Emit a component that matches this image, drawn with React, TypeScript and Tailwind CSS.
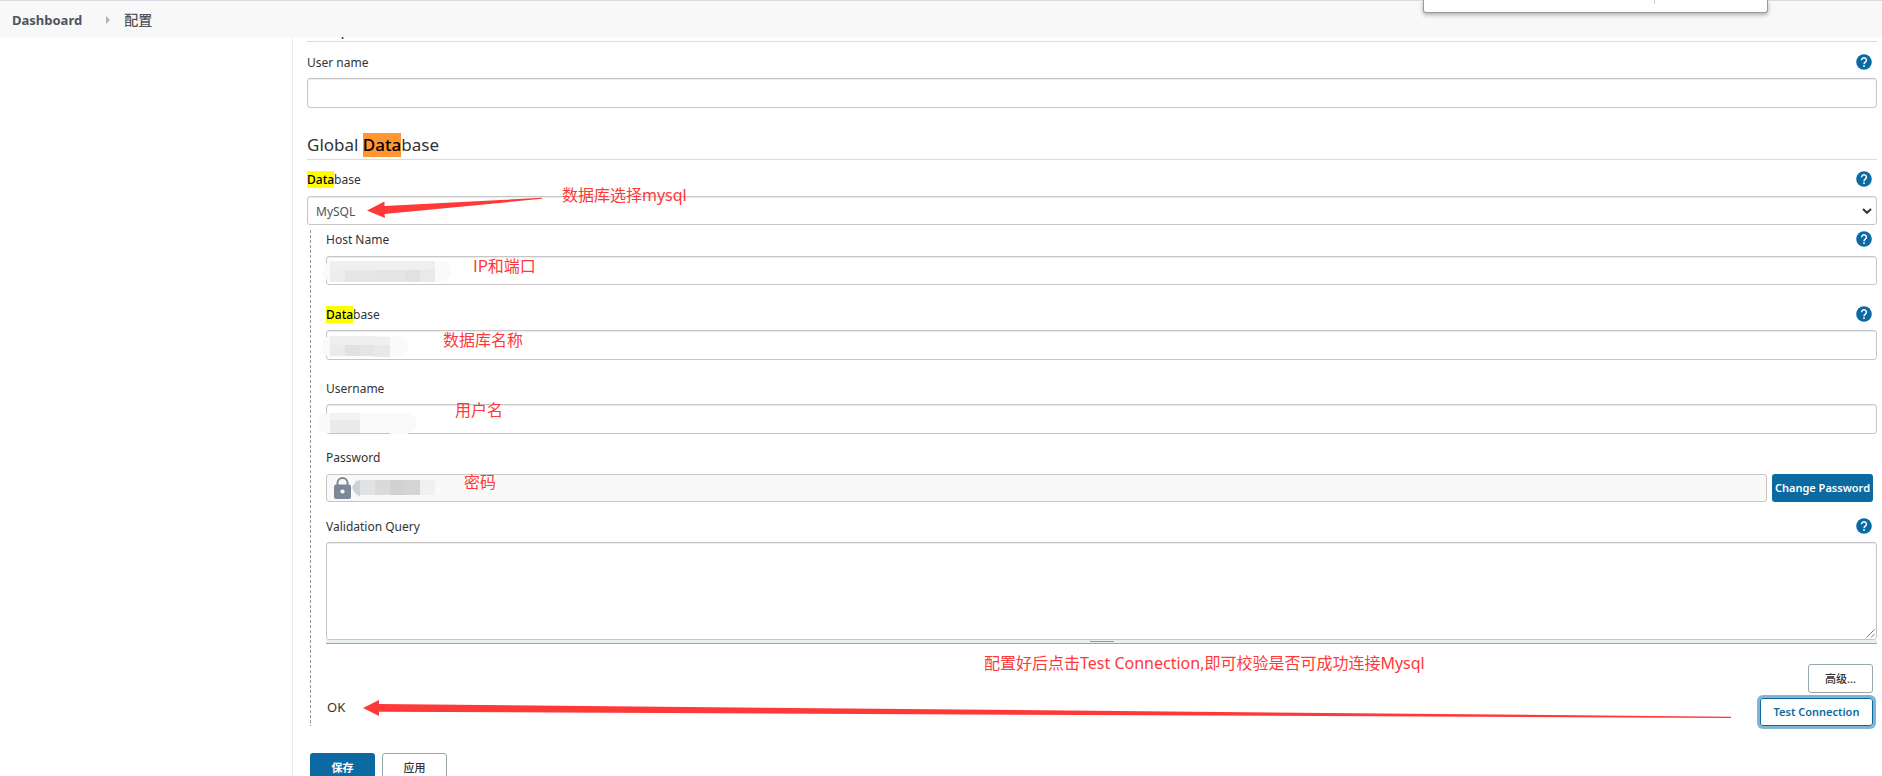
import type { ReactNode } from "react";

const inputClass =
  "block w-full rounded-[3px] border border-[#c6c6c6] bg-white px-2 shadow-[inset_0_1px_1px_rgba(0,0,0,0.08)] outline-none";

function Mark({ children }: { children: ReactNode }) {
  return <mark className="bg-[#ffff00] font-medium text-black">{children}</mark>;
}

function Help() {
  return (
    <button type="button" aria-label="Help" className="mr-[5px] block size-4 shrink-0">
      <svg viewBox="0 0 16 16" className="block size-4">
        <circle cx="8" cy="8" r="7.8" fill="#0b6aa2" />
        <path d="M5.600 6.200a2.400 2.400 0 1 1 3.700 2c-.9.6-1.300.9-1.300 2" fill="none" stroke="#fff" strokeWidth="1.5" />
        <rect x="7.2" y="11.3" width="1.6" height="1.6" fill="#fff" />
      </svg>
    </button>
  );
}

function Row({ id, help, children }: { id: string; help?: boolean; children: ReactNode }) {
  return (
    <div className="flex h-[18px] items-center justify-between">
      <label htmlFor={id} className="pt-0.5">{children}</label>
      {help && <Help />}
    </div>
  );
}

function Note({ className, children }: { className: string; children: ReactNode }) {
  return (
    <span className={`pointer-events-none absolute z-10 text-base leading-5 whitespace-nowrap text-[#ff3838] ${className}`}>
      {children}
    </span>
  );
}

export default function App() {
  return (
    <div className="h-screen overflow-hidden bg-white font-['Noto_Sans','Noto_Sans_CJK_SC',sans-serif] text-xs leading-[18px] text-[#333]">
      <header className="relative z-20 flex h-[37px] items-center border-t border-[#d9d9de] bg-[#f8f8f8] pt-0.5 pl-3 text-[13px] font-bold text-[#4d545d]">
        <a href="#dashboard">Dashboard</a>
        <svg viewBox="0 0 4 8" className="mr-[14px] ml-6 h-2 w-1">
          <path d="M0 0L4 4L0 8Z" fill="#b3b3b3" />
        </svg>
        <a href="#configure" className="text-sm font-medium">配置</a>
        <div className="absolute -top-px right-[114px] flex h-[13px] w-[345px] justify-end rounded-b-[3px] border border-t-0 border-[#999] bg-white shadow-[0_2px_4px_rgba(0,0,0,0.3)]">
          <span className="mr-[112px] h-1 w-px bg-[#ccc]" />
        </div>
      </header>

      <div className="flex h-[calc(100vh-37px)]">
        <aside className="w-[293px] shrink-0 border-r border-[#e8eef0]" />
        <main className="min-w-0 flex-1 pr-[5px] pl-[14px]">
          <div className="flex h-[5px] items-end overflow-hidden border-b border-[#dcdcdc]">
            <h2 className="text-base leading-6">Setup</h2>
          </div>
          <div className="mt-[11px]">
            <Row id="user" help>User name</Row>
          </div>
          <input id="user" className={`mt-[7px] h-[30px] ${inputClass}`} />

          <h2 className="mt-[25px] flex h-[27px] items-start border-b border-[#dcdcdc] text-[17px] leading-6">
            <span className="whitespace-pre">Global </span>
            <mark className="bg-[#ff9632] font-medium text-black">Data</mark>base
          </h2>
          <div className="mt-[10px]">
            <Row id="db" help>
              <Mark>Data</Mark>base
            </Row>
          </div>
          <div className="relative mt-2">
            <select id="db" className={`h-[29px] appearance-none pt-0.5 text-xs text-[#4d545d] ${inputClass}`}>
              <option>MySQL</option>
            </select>
            <svg viewBox="0 0 10 6" className="pointer-events-none absolute top-3 right-[5px] h-[6px] w-[10px]">
              <path d="M1 1L5 4.800L9 1" fill="none" stroke="#333" strokeWidth="2" />
            </svg>
            <svg viewBox="0 0 180 24" className="pointer-events-none absolute top-0 left-[60px] h-6 w-[180px]">
              <path d="M0 14.500L17.500 5.500V10L175 1.800V2.800L17.500 18L18 22Z" fill="#ff3838" />
            </svg>
            <Note className="-top-[11px] left-[255px]">数据库选择mysql</Note>
          </div>

          <section className="mt-[5px] ml-[3px] bg-[repeating-linear-gradient(to_bottom,#999_0px,#999_3px,transparent_3px,transparent_5px)] bg-[length:1px_100%] bg-no-repeat pl-4">
            <Row id="host" help>Host Name</Row>
            <div className="relative mt-2">
              <input id="host" className={`h-[29px] ${inputClass}`} />
              <svg viewBox="0 0 128 22" className="absolute top-[5px] -left-[3px] h-[22px] w-32">
                <rect width="128" height="21" rx="10" fill="#fafafa" />
                <path d="M7 0H112V9H7Z" fill="#efefee" />
                <path d="M7 9H22V21H7Z" fill="#ededec" />
                <path d="M22 9H52V21H22Z" fill="#e5e6e8" />
                <path d="M52 9H82V21H52Z" fill="#e5e5e5" />
                <path d="M82 9H97V21H82Z" fill="#e2e0e0" />
                <path d="M97 9H112V21H97Z" fill="#e6eaeb" />
              </svg>
              <Note className="-top-px left-[147px] font-['Noto_Sans_CJK_SC',sans-serif]">IP和端口</Note>
            </div>
            <div className="mt-5">
              <Row id="dbname" help>
                <Mark>Data</Mark>base
              </Row>
            </div>
            <div className="relative mt-[7px]">
              <input id="dbname" className={`h-[30px] ${inputClass}`} />
              <svg viewBox="0 0 87 22" className="absolute top-[5px] -left-[5px] h-[22px] w-[87px]">
                <rect y="1" width="87" height="21" rx="10" fill="#fafafa" />
                <path d="M9 1H56V2H69V11H9Z" fill="#efefef" />
                <path d="M9 10H24V21H9Z" fill="#ebebea" />
                <path d="M24 10H39V21H24Z" fill="#e1e1e4" />
                <path d="M39 10H53V21H39Z" fill="#e5e5e5" />
                <path d="M53 10H69V22H53Z" fill="#e8e8e8" />
              </svg>
              <Note className="top-0 left-[117px]">数据库名称</Note>
            </div>
            <div className="mt-[19px]">
              <Row id="username">Username</Row>
            </div>
            <div className="relative mt-[7px]">
              <input id="username" className={`h-[30px] ${inputClass}`} />
              <svg viewBox="0 0 98 22" className="absolute top-[8px] -left-[8px] h-[22px] w-[98px]">
                <path d="M10 1H88a10 10 0 0 1 2 20V22H72V21H10a10 10 0 0 1 0-20Z" fill="#fafafa" />
                <path d="M12 1H42V8H12Z" fill="#f2f2f2" />
                <path d="M12 8H42V21H12Z" fill="#eaeae9" />
              </svg>
              <Note className="-top-1 left-[129px]">用户名</Note>
            </div>
            <div className="mt-[14px]">
              <Row id="password">Password</Row>
            </div>
            <div className="mt-2 flex gap-[5px] pr-1">
              <div className="relative min-w-0 flex-1">
                <input id="password" readOnly className="block h-7 w-full rounded-[3px] border border-[#c6c6c6] bg-[#f9f9f9] outline-none" />
                <svg viewBox="0 0 17 22" className="absolute top-[3px] left-2 h-[22px] w-[17px]">
                  <path d="M3.500 9V6a5 5 0 0 1 10 0V9" fill="none" stroke="#7a8899" strokeWidth="2" />
                  <rect y="7.500" width="17" height="14.500" rx="2" fill="#7a8899" />
                  <circle cx="8.500" cy="14.500" r="2.100" fill="#fff" />
                </svg>
                <svg viewBox="0 0 84 17" className="absolute top-[6px] left-[26px] h-[17px] w-[84px]">
                  <path d="M8 0V17L2 12L0 7L4 1Z" fill="#ccd2d7" />
                  <path d="M8 0H23V15H8Z" fill="#e2e2e2" />
                  <path d="M23 0H38V15H23Z" fill="#dadad9" />
                  <path d="M38 0H53V15H38Z" fill="#d1d3d3" />
                  <path d="M53 0H68V15H53Z" fill="#d4d4d2" />
                  <path d="M68 0H83V15H68Z" fill="#eef0f2" />
                </svg>
                <Note className="-top-0.5 left-[138px]">密码</Note>
              </div>
              <button type="button" className="h-7 w-[101px] rounded-[3px] bg-[#0b6aa2] text-[11px] font-semibold whitespace-nowrap text-white">
                Change Password
              </button>
            </div>
            <div className="mt-[15px]">
              <Row id="query" help>Validation Query</Row>
            </div>
            <div className="relative mt-[7px]">
              <textarea id="query" className={`h-[98px] resize-none ${inputClass}`} />
              <svg viewBox="0 0 9 9" className="pointer-events-none absolute right-[2px] bottom-[6px] size-[9px]">
                <path d="M.5 8.500L8.500.5M5 8.500L8.500 5" stroke="#777" />
              </svg>
              <div className="flex h-1 justify-center border-b border-[#98a6ad] bg-[#eaeff2]">
                <span className="mt-px h-px w-6 bg-[#999]" />
              </div>
              <Note className="top-[111px] left-[658px]">配置好后点击Test Connection,即可校验是否可成功连接Mysql</Note>
            </div>
            <div className="mt-5 flex justify-end pr-1">
              <button type="button" className="h-[29px] w-[65px] rounded-[3px] border border-[#98a6ad] text-[11px] font-medium text-[#333]">高级...</button>
            </div>
            <div className="mt-[5px] flex items-start gap-5 pr-1">
              <output className="w-4 pl-px text-[13px] leading-[18px]">OK</output>
              <svg viewBox="0 0 1377 19" preserveAspectRatio="none" className="mt-px h-[19px] min-w-0 flex-1">
                <path d="M1 9L17 1V5L1368 17.800V19L17 12.700V17Z" fill="#ff3838" />
              </svg>
              <button type="button" className="h-7 w-[113px] rounded-[3px] border border-[#0b6aa2] text-[11px] font-semibold whitespace-nowrap text-[#0b6aa2] shadow-[0_0_0_3px_#85b4d1]">
                Test Connection
              </button>
            </div>
          </section>

          <div className="mt-[27px] ml-[3px] flex gap-[7px]">
            <button type="submit" className="h-[29px] w-[65px] rounded-[3px] bg-[#0b6aa2] text-[11px] font-bold text-white">保存</button>
            <button type="button" className="h-[29px] w-[65px] rounded-[3px] border border-[#98a6ad] text-[11px] font-medium text-[#333]">应用</button>
          </div>
        </main>
      </div>
    </div>
  );
}
